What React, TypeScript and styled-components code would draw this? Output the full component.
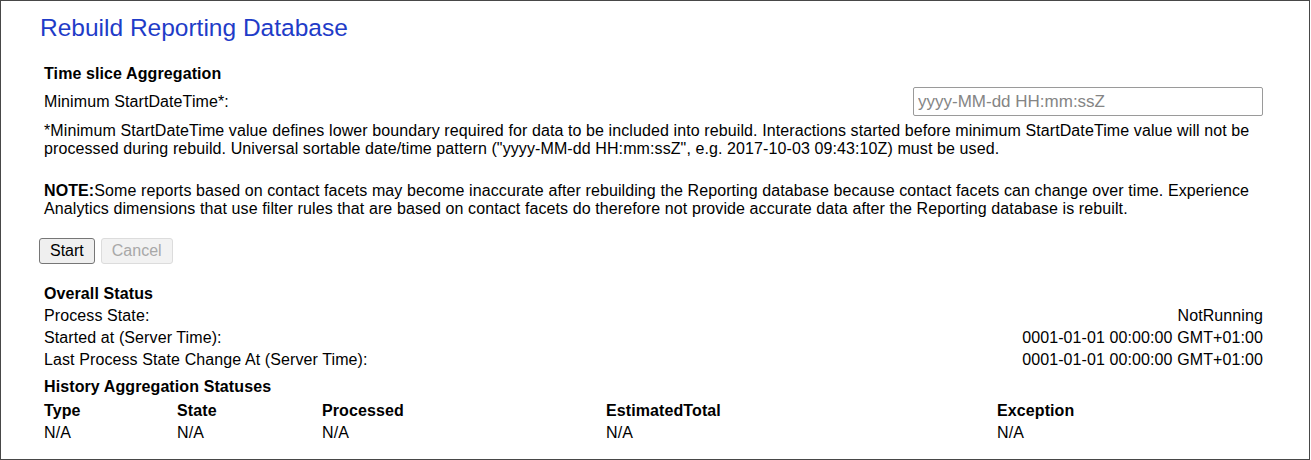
import styled, { createGlobalStyle } from "styled-components";

const GlobalStyle = createGlobalStyle`
  html, body {
    margin: 0;
    padding: 0;
    background: #fff;
  }
  body {
    font-family: "Liberation Sans", Arial, sans-serif;
    font-size: 16px;
    letter-spacing: 0.1px;
    color: #000;
  }
`;

const statusRows = [
  { label: "Process State:", value: "NotRunning" },
  { label: "Started at (Server Time):", value: "0001-01-01 00:00:00 GMT+01:00" },
  {
    label: "Last Process State Change At (Server Time):",
    value: "0001-01-01 00:00:00 GMT+01:00",
  },
];

const historyColumns = ["Type", "State", "Processed", "EstimatedTotal", "Exception"];

const App = () => (
  <>
    <GlobalStyle />
    <Frame>
      <Title>Rebuild Reporting Database</Title>
      <Content>
        <SectionHeading>Time slice Aggregation</SectionHeading>
        <FieldRow>
          <span>Minimum StartDateTime*:</span>
          <DateInput placeholder="yyyy-MM-dd HH:mm:ssZ" />
        </FieldRow>
        <Paragraph>
          *Minimum StartDateTime value defines lower boundary required for data to be
          included into rebuild. Interactions started before minimum StartDateTime value
          will not be processed during rebuild. Universal sortable date/time pattern
          ("yyyy-MM-dd HH:mm:ssZ", e.g. 2017-10-03 09:43:10Z) must be used.
        </Paragraph>
        <Note>
          <b>NOTE:</b>Some reports based on contact facets may become inaccurate after
          rebuilding the Reporting database because contact facets can change over time.
          Experience Analytics dimensions that use filter rules that are based on contact
          facets do therefore not provide accurate data after the Reporting database is
          rebuilt.
        </Note>
        <ButtonBar>
          <ActionButton>Start</ActionButton>
          <ActionButton disabled>Cancel</ActionButton>
        </ButtonBar>

        <StatusBlock>
          <StatusRow>
            <b>Overall Status</b>
          </StatusRow>
          {statusRows.map((r) => (
            <StatusRow key={r.label}>
              <span>{r.label}</span>
              <span>{r.value}</span>
            </StatusRow>
          ))}
        </StatusBlock>

        <HistoryHeading>History Aggregation Statuses</HistoryHeading>
        <HistoryGrid>
          {historyColumns.map((c) => (
            <HeaderCell key={c}>{c}</HeaderCell>
          ))}
          {historyColumns.map((c) => (
            <Cell key={c}>N/A</Cell>
          ))}
        </HistoryGrid>
      </Content>
    </Frame>
  </>
);

export default App;

const Frame = styled.div`
  box-sizing: border-box;
  width: 1310px;
  height: 460px;
  border: 1px solid #474747;
  overflow: hidden;
`;

const Title = styled.h1`
  margin: 13px 0 0 39px;
  font-size: 24.5px;
  line-height: 28px;
  font-weight: normal;
  letter-spacing: 0;
  color: #1f3cc8;
`;

const Content = styled.div`
  width: 1219px;
  margin-left: 43px;
  margin-top: 23px;
`;

const SectionHeading = styled.div`
  font-weight: bold;
  line-height: 18px;
`;

const FieldRow = styled.div`
  display: flex;
  justify-content: space-between;
  align-items: center;
  margin-top: 4px;
  line-height: 18px;
`;

const DateInput = styled.input`
  box-sizing: border-box;
  width: 350px;
  height: 29px;
  padding: 0 4px;
  border: 1px solid #9a9a9a;
  border-radius: 2px;
  font-family: "Liberation Sans", Arial, sans-serif;
  font-size: 17px;
  &::placeholder {
    color: #858585;
  }
`;

const Paragraph = styled.p`
  margin: 6px 0 0;
  line-height: 18px;
`;

const Note = styled(Paragraph)`
  margin-top: 24px;
`;

const ButtonBar = styled.div`
  display: flex;
  gap: 6px;
  margin: 20px 0 0 -5px;
`;

const ActionButton = styled.button`
  box-sizing: border-box;
  height: 26px;
  padding: 0 10px;
  font-family: "Liberation Sans", Arial, sans-serif;
  font-size: 16px;
  color: #000;
  background: #efefef;
  border: 1px solid #767676;
  border-radius: 3px;
  &:disabled {
    color: #a8a8a8;
    background: #f2f2f2;
    border-color: #dcdcdc;
  }
`;

const StatusBlock = styled.div`
  margin-top: 19px;
`;

const StatusRow = styled.div`
  display: flex;
  justify-content: space-between;
  align-items: center;
  height: 22px;
`;

const HistoryHeading = styled.div`
  margin-top: 5px;
  height: 22px;
  line-height: 22px;
  font-weight: bold;
`;

const HistoryGrid = styled.div`
  display: grid;
  grid-template-columns: 133px 145px 284px 391px 1fr;
  grid-auto-rows: 22px;
  align-items: center;
  margin-top: 2px;
`;

const HeaderCell = styled.div`
  font-weight: bold;
`;

const Cell = styled.div``;
